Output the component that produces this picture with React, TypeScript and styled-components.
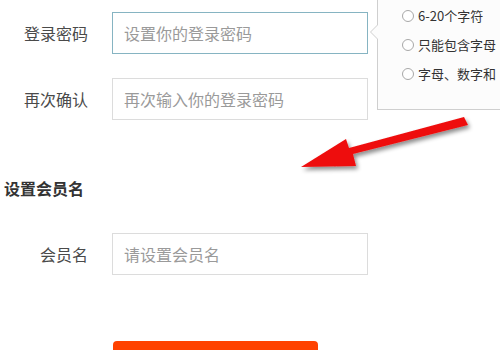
import styled, { createGlobalStyle } from "styled-components";

const GlobalStyle = createGlobalStyle`
  html, body {
    margin: 0;
    padding: 0;
    background: #ffffff;
  }
  body {
    font-family: "Noto Sans CJK SC", "Liberation Sans", sans-serif;
  }
`;

const rules = ["6-20个字符", "只能包含字母", "字母、数字和"];

const App = () => {
  return (
    <Page>
      <GlobalStyle />
      <Form>
        <Row>
          <Label>登录密码</Label>
          <FieldWrap>
            <Input placeholder="设置你的登录密码" $focused />
            <Tip>
              {rules.map((r) => (
                <TipItem key={r}>
                  <Dot />
                  {r}
                </TipItem>
              ))}
            </Tip>
          </FieldWrap>
        </Row>
        <Row>
          <Label>再次确认</Label>
          <Input placeholder="再次输入你的登录密码" />
        </Row>
        <SectionTitle>设置会员名</SectionTitle>
        <Row>
          <Label>会员名</Label>
          <Input placeholder="请设置会员名" />
        </Row>
        <ButtonRow>
          <SubmitButton />
        </ButtonRow>
      </Form>
      <Arrow width="500" height="350" viewBox="0 0 500 350">
        <defs>
          <filter id="sh" x="-20%" y="-50%" width="140%" height="200%">
            <feDropShadow dx="2" dy="3" stdDeviation="2" floodColor="#000" floodOpacity="0.45" />
          </filter>
        </defs>
        <path
          d="M464 117 L468 125 L353 154 L356 166 L301 167 L346 139 L349 148 Z"
          fill="#ee1111"
          filter="url(#sh)"
          strokeLinejoin="round"
        />
      </Arrow>
    </Page>
  );
};

const Page = styled.div`
  position: relative;
  width: 500px;
  height: 350px;
  overflow: hidden;
  background: #fff;
`;

const Form = styled.div`
  display: flex;
  flex-direction: column;
  padding-top: 12px;
`;

const Row = styled.div`
  display: flex;
  align-items: center;
  gap: 24px;
  height: 42px;
  margin-bottom: 24px;
`;

const Label = styled.div`
  width: 88px;
  text-align: right;
  font-size: 16px;
  color: #4a4a4a;
`;

const FieldWrap = styled.div`
  position: relative;
  display: flex;
`;

const Input = styled.input<{ $focused?: boolean }>`
  box-sizing: border-box;
  width: 256px;
  height: 42px;
  padding: 0 11px;
  font-size: 16px;
  font-family: "Noto Sans CJK SC", "Liberation Sans", sans-serif;
  color: #333;
  border: 1px solid ${({ $focused }) => ($focused ? "#86b4c2" : "#dcdcdc")};
  outline: none;
  background: #fff;
  &::placeholder {
    color: #9a9a9a;
  }
`;

const Tip = styled.div`
  position: absolute;
  left: 265px;
  top: -30px;
  width: 150px;
  height: 128px;
  box-sizing: border-box;
  padding: 23px 0 0 24px;
  background: #fcfcfc;
  border: 1px solid #cfcfcf;
  display: flex;
  flex-direction: column;
  gap: 9px;
  &::before {
    content: "";
    position: absolute;
    left: -8px;
    top: 41px;
    border-style: solid;
    border-width: 8px 8px 8px 0;
    border-color: transparent #cfcfcf transparent transparent;
  }
  &::after {
    content: "";
    position: absolute;
    left: -7px;
    top: 41px;
    border-style: solid;
    border-width: 8px 8px 8px 0;
    border-color: transparent #fcfcfc transparent transparent;
  }
`;

const TipItem = styled.div`
  display: flex;
  align-items: center;
  gap: 4px;
  font-size: 13px;
  line-height: 20px;
  color: #333;
  white-space: nowrap;
`;

const Dot = styled.span`
  box-sizing: border-box;
  flex-shrink: 0;
  width: 12px;
  height: 12px;
  border-radius: 50%;
  border: 1.5px solid #a8a8a8;
  background: #fff;
`;

const SectionTitle = styled.div`
  padding-left: 4px;
  margin-top: 32px;
  margin-bottom: 33px;
  font-size: 16px;
  font-weight: bold;
  color: #333;
`;

const ButtonRow = styled.div`
  display: flex;
  padding-left: 113px;
  margin-top: 42px;
`;

const SubmitButton = styled.div`
  width: 205px;
  height: 44px;
  border-radius: 4px;
  background: #ff4200;
`;

const Arrow = styled.svg`
  position: absolute;
  left: 0;
  top: 0;
  pointer-events: none;
`;

export default App;
